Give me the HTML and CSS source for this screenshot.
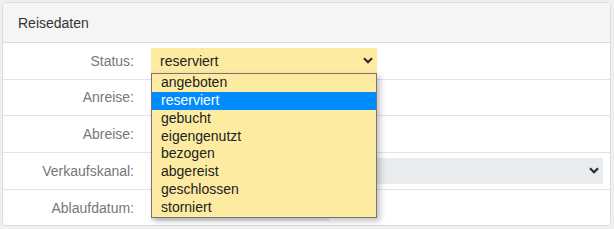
FILE: index.html
```html
<!DOCTYPE html>
<html lang="de">
<head>
<meta charset="UTF-8">
<meta name="viewport" content="width=device-width, initial-scale=1.0">
<title>Reisedaten</title>
<link rel="stylesheet" href="styles.css">
</head>
<body>

<div class="card">
    <div class="card-header">Reisedaten</div>

    <div class="row">
        <label class="label">Status:</label>
        <div class="control">
            <div class="select select-status">
                <span>reserviert</span>
                <svg class="chevron" width="10" height="7" viewBox="0 0 10 7"><path d="M1 1.2 L5 5.2 L9 1.2" /></svg>
            </div>
            <ul class="options">
                <li>angeboten</li>
                <li class="selected">reserviert</li>
                <li>gebucht</li>
                <li>eigengenutzt</li>
                <li>bezogen</li>
                <li>abgereist</li>
                <li>geschlossen</li>
                <li>storniert</li>
            </ul>
        </div>
    </div>

    <div class="row">
        <label class="label">Anreise:</label>
        <div class="control"><div class="input input-date"></div></div>
    </div>

    <div class="row">
        <label class="label">Abreise:</label>
        <div class="control"><div class="input input-date"></div></div>
    </div>

    <div class="row">
        <label class="label">Verkaufskanal:</label>
        <div class="control">
            <div class="select select-wide">
                <span></span>
                <svg class="chevron" width="10" height="7" viewBox="0 0 10 7"><path d="M1 1.2 L5 5.2 L9 1.2" /></svg>
            </div>
        </div>
    </div>

    <div class="row last">
        <label class="label">Ablaufdatum:</label>
        <div class="control"><div class="input input-readonly"></div></div>
    </div>
</div>

</body>
</html>
```

FILE: styles.css
```css
* { box-sizing: border-box; }
body {
    margin: 0;
    padding: 2px 3px 0 2px;
    background-color: #eef0f1;
    color: #333;
    font-family: "Liberation Sans", Arial, sans-serif;
    font-size: 14px;
}
.card {
    background-color: white;
    border: 1px solid #dcdcdc;
    border-radius: 4px;
    overflow: visible;
}
.card-header {
    background-color: #f5f5f5;
    border-bottom: 1px solid #dcdcdc;
    border-radius: 4px 4px 0 0;
    height: 40px;
    padding: 0 15px;
    display: flex;
    align-items: center;
    color: #333;
}
.row {
    display: grid;
    grid-template-columns: 131px 1fr;
    column-gap: 17px;
    align-items: center;
    padding: 4.3px 7px 4.4px 0;
    border-bottom: 1px solid #e3e3e3;
}
.row.last { border-bottom: none; }
.label {
    text-align: right;
    color: #777;
}
.control {
    position: relative;
    height: 27px;
    display: flex;
    align-items: center;
}
.select {
    height: 26px;
    display: flex;
    align-items: center;
    justify-content: space-between;
    padding: 0 4px 0 9px;
}
.select-status {
    width: 226px;
    background-color: #fdeba1;
    color: #222;
}
.select-wide {
    width: 100%;
    background-color: #e9ecef;
}
.chevron path {
    fill: none;
    stroke: #2a2a2a;
    stroke-width: 2.2;
}
.input {
    height: 26px;
    width: 178px;
}
.input-readonly { background-color: #e9ecef; }
.options {
    position: absolute;
    top: 26px;
    left: 0;
    width: 226px;
    margin: 0;
    padding: 0;
    list-style: none;
    background-color: #fdeba1;
    border: 1px solid #767676;
    box-shadow: 3px 3px 6px rgba(0,0,0,0.25);
    color: #222;
    z-index: 2;
}
.options li {
    height: 17.8px;
    line-height: 17.8px;
    padding-left: 9px;
}
.options li.selected {
    background-color: #008cff;
    color: white;
}
```
